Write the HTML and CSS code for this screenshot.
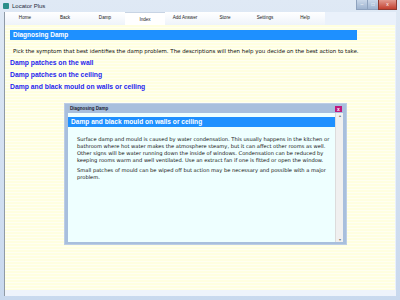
FILE: index.html
```html
<!DOCTYPE html>
<html lang="en">

<head>
    <meta charset="UTF-8">
    <title>Locator Plus</title>
    <link rel="stylesheet" href="styles.css">
</head>

<body>
    <div class="app">
        <div class="titlebar">
            <span class="app-icon"></span>
            <span class="app-title">Locator Plus</span>
            <div class="win-btns">
                <span class="win-btn">&#8211;</span>
                <span class="win-btn">&#9633;</span>
                <span class="win-btn close">x</span>
            </div>
        </div>
        <div class="client">
            <div class="tabs">
                <a class="tab">Home</a>
                <a class="tab">Back</a>
                <a class="tab">Damp</a>
                <a class="tab active">Index</a>
                <a class="tab">Add Answer</a>
                <a class="tab">Store</a>
                <a class="tab">Settings</a>
                <a class="tab">Help</a>
            </div>
            <div class="content">
                <div class="page-title">Diagnosing Damp</div>
                <p class="intro">Pick the symptom that best identifies the damp problem. The descriptions will then help you decide on the best action to take.</p>
                <a class="symptom">Damp patches on the wall</a>
                <a class="symptom">Damp patches on the ceiling</a>
                <a class="symptom">Damp and black mould on walls or ceiling</a>

                <div class="dialog">
                    <div class="dialog-bar">
                        <span>Diagnosing Damp</span>
                        <span class="dialog-close">x</span>
                    </div>
                    <div class="dialog-body">
                        <div class="dialog-text">
                            <div class="dialog-title">Damp and black mould on walls or ceiling</div>
                            <p>Surface damp and mould is caused by water condensation. This usually happens in the kitchen or bathroom where hot water makes the atmosphere steamy, but it can affect other rooms as well. Other signs will be water running down the inside of windows. Condensation can be reduced by keeping rooms warm and well ventilated. Use an extract fan if one is fitted or open the window.</p>
                            <p>Small patches of mould can be wiped off but action may be necessary and possible with a major problem.</p>
                        </div>
                        <div class="scrollbar">
                            <span class="arrow">&#9652;</span>
                            <span class="arrow">&#9662;</span>
                        </div>
                    </div>
                </div>
            </div>
            <div class="statusbar"></div>
        </div>
    </div>
</body>

</html>
```

FILE: styles.css
```css
body {
    margin: 0;
    font-family: "Liberation Sans", Arial, sans-serif;
}

.app {
    width: 400px;
    height: 300px;
    display: flex;
    flex-direction: column;
    background: linear-gradient(to bottom, #dfe9f5, #c9d9ee);
    box-sizing: border-box;
    padding: 0 4px 4px 4px;
}

.titlebar {
    height: 12px;
    display: flex;
    align-items: center;
    font-size: 6px;
    color: #1e2a3a;
}

.app-icon {
    width: 6px;
    height: 6px;
    background: #2d8f8a;
    border-radius: 1px;
    margin: 0 3px 0 -1px;
}

.win-btns {
    margin-left: auto;
    margin-right: -1px;
    display: flex;
    align-self: flex-start;
}

.win-btn {
    width: 10px;
    height: 9px;
    font-size: 5px;
    line-height: 9px;
    text-align: center;
    color: #fff;
    background: linear-gradient(to bottom, #cad8ea, #9fb4d0);
    border: 1px solid #8ea2be;
    border-top: 0;
    border-right: 0;
}

.win-btn.close {
    width: 17px;
    background: linear-gradient(to bottom, #e29a8f, #c3402f);
    border: 1px solid #8f3a30;
    border-top: 0;
}

.client {
    flex: 1;
    display: flex;
    flex-direction: column;
    background: #eaf1fb;
    border-left: 1px solid #8f9aa6;
}

.tabs {
    display: flex;
    height: 13px;
}

.tab {
    width: 40px;
    font-size: 4.6px;
    line-height: 12px;
    text-align: center;
    color: #222;
    background: linear-gradient(to bottom, #ffffff, #eef3fa);
}

.tab.active {
    background: #fff;
    border-top: 1px solid #c8d4e4;
    line-height: 13px;
}

.content {
    flex: 1;
    position: relative;
    background: repeating-linear-gradient(to bottom, #ffffe0 0, #ffffe0 2px, #fffff2 2px, #fffff2 3px);
    padding: 5px 4px 0 5px;
    margin-right: 1px;
}

.page-title {
    width: 344px;
    height: 10px;
    background: #1e90ff;
    color: #fff;
    font-weight: bold;
    font-size: 6.5px;
    line-height: 10px;
    padding-left: 3px;
}

.intro {
    font-family: "DejaVu Sans", Verdana, sans-serif;
    font-size: 5.45px;
    margin: 8px 0 3px 3px;
    color: #111;
}

.symptom {
    display: block;
    color: #1f1fee;
    font-weight: bold;
    font-size: 6.8px;
    line-height: 12px;
}

.dialog {
    position: absolute;
    left: 60px;
    top: 79px;
    width: 281px;
    height: 140px;
    background: #a8bfdd;
    display: flex;
    flex-direction: column;
    box-shadow: 0 0 0 1px #bccde5;
}

.dialog-bar {
    height: 9px;
    display: flex;
    align-items: center;
    padding: 0 4px 0 5px;
    font-size: 4.5px;
    font-weight: bold;
    color: #1a2030;
}

.dialog-close {
    margin-left: auto;
    width: 7px;
    height: 6px;
    background: #c0187c;
    color: #fff;
    font-size: 5px;
    line-height: 6px;
    text-align: center;
}

.dialog-body {
    flex: 1;
    display: flex;
    margin: 0 3px 2px 3px;
    background: #eeffff;
}

.dialog-text {
    flex: 1;
    padding: 4px 0 0 0;
}

.dialog-title {
    height: 10px;
    background: #1e90ff;
    color: #fff;
    font-weight: bold;
    font-size: 6.6px;
    line-height: 10px;
    padding-left: 3px;
}

.dialog-text p {
    font-family: "DejaVu Sans", Verdana, sans-serif;
    font-size: 5.15px;
    line-height: 7px;
    margin: 9px 1px 3px 9px;
    color: #111;
}

.dialog-text p + p {
    margin-top: 0;
}

.scrollbar {
    width: 7px;
    display: flex;
    flex-direction: column;
    justify-content: space-between;
    background: #f0f0f0;
    border-left: 1px solid #dcdcdc;
}

.arrow {
    font-size: 4px;
    color: #777;
    text-align: center;
}

.statusbar {
    height: 6px;
    background: #eef3fb;
}
```
